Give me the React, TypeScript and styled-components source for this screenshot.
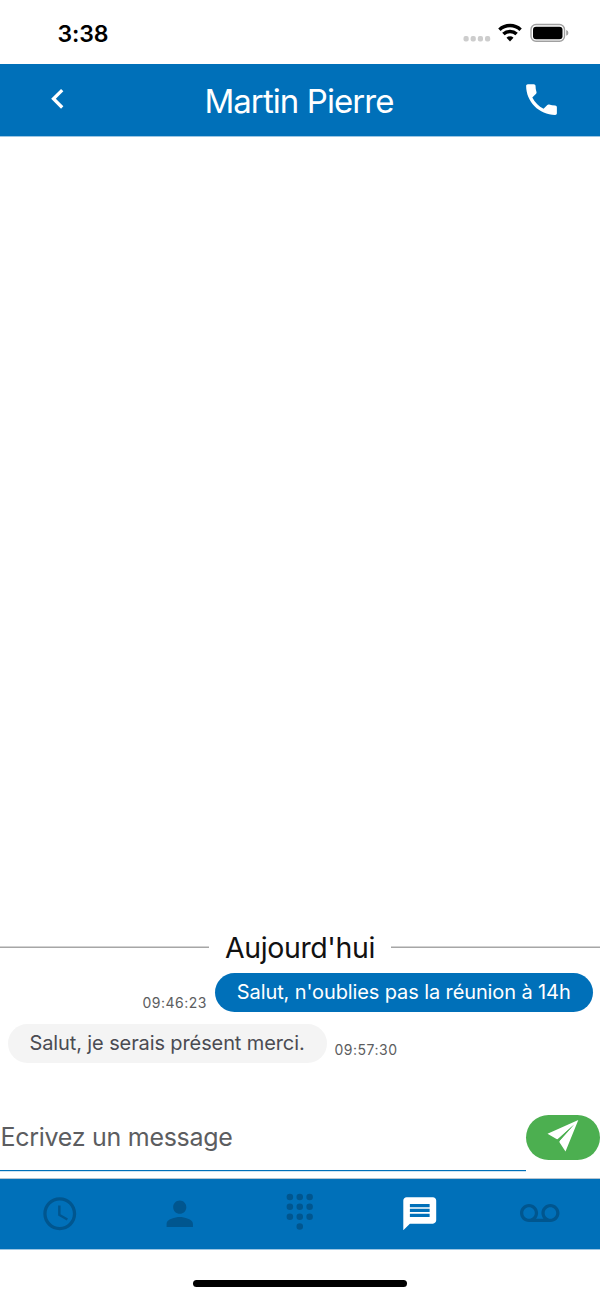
import React from "react";
import styled, { createGlobalStyle } from "styled-components";

const BLUE = "#0070b9";

const GlobalStyle = createGlobalStyle`
  * { box-sizing: border-box; }
  body { margin: 0; background: #fff; font-family: Inter, "Liberation Sans", sans-serif; }
`;

const Screen = styled.main`
  display: flex;
  flex-direction: column;
  width: 600px;
  height: 1299px;
  overflow: hidden;
  background: #fff;
`;

const StatusBar = styled.div`
  display: flex;
  align-items: center;
  justify-content: space-between;
  height: 64px;
  padding: 2px 31px 0 57.5px;
  flex: none;
`;

const Clock = styled.span`
  padding-top: 1px;
  font-size: 23px;
  font-weight: 600;
  line-height: 28px;
  letter-spacing: -0.1px;
  color: #000;
`;

const StatusIcons = styled.svg`
  display: block;
  width: 106px;
  height: 20px;
`;

const Header = styled.header`
  display: grid;
  grid-template-columns: 115px 1fr 117px;
  align-items: center;
  justify-items: center;
  height: 72px;
  flex: none;
  background: ${BLUE};
  color: #fff;
  box-shadow: 0 1px 0 #9cc6e3;
`;

const Title = styled.h1`
  margin: 0;
  padding-top: 1px;
  font-size: 33px;
  font-weight: 400;
  line-height: 40px;
  letter-spacing: -0.92px;
  white-space: nowrap;
`;

const IconButton = styled.button<{ $lift?: number }>`
  display: flex;
  padding: 0 0 ${(p) => p.$lift ?? 0}px;
  border: 0;
  background: none;
  color: inherit;
`;

const Glyph = styled.svg<{ $size: number }>`
  display: block;
  width: ${(p) => p.$size}px;
  height: ${(p) => p.$size}px;
  fill: currentColor;
`;

const Thread = styled.section`
  display: flex;
  flex: 1;
  flex-direction: column;
  justify-content: flex-end;
  padding-bottom: 40px;
`;

const DayDivider = styled.div`
  display: flex;
  align-items: center;
  gap: 16px;
  height: 36px;
  margin-bottom: 8px;
  font-size: 28.5px;
  font-weight: 400;
  letter-spacing: -0.4px;
  color: #111;
  white-space: nowrap;
  &::before, &::after {
    content: "";
    flex: 1;
    height: 2px;
    background: linear-gradient(#d2d2d2 50%, #a6a6a6 50%);
  }
`;

const MessageRow = styled.div<{ $mine?: boolean }>`
  display: flex;
  flex-direction: ${(p) => (p.$mine ? "row-reverse" : "row")};
  align-items: flex-end;
  gap: 8px;
  height: 39px;
  margin: 0 7.5px 12px;
`;

const Bubble = styled.div<{ $mine?: boolean; $width: number }>`
  display: flex;
  align-items: center;
  justify-content: center;
  width: ${(p) => p.$width}px;
  height: 39px;
  padding-bottom: 1px;
  border-radius: 20px;
  font-size: 20px;
  letter-spacing: -0.11px;
  white-space: nowrap;
  background: ${(p) => (p.$mine ? BLUE : "#f4f4f4")};
  color: ${(p) => (p.$mine ? "#fff" : "#4a4b52")};
`;

const Time = styled.time<{ $lift: number }>`
  padding-bottom: ${(p) => p.$lift}px;
  font-size: 14px;
  line-height: 18px;
  letter-spacing: 0.5px;
  color: #5c5d60;
`;

const Composer = styled.form`
  display: flex;
  flex: none;
  align-items: flex-start;
  height: 64px;
`;

const Field = styled.div`
  display: flex;
  align-items: center;
  flex: 1;
  height: 56px;
  padding: 0 0 11px 0.5px;
  border-bottom: 1px solid ${BLUE};
  box-shadow: 0 1px 0 #cfe3f2;
  font-size: 25px;
  letter-spacing: -0.28px;
  color: #5c5d60;
`;

const SendButton = styled.button`
  width: 74px;
  height: 45px;
  padding: 0;
  border: 0;
  border-radius: 23px;
  background: #4caf50;
  color: #fff;
`;

const SendGlyph = styled.svg`
  display: block;
  width: 74px;
  height: 45px;
  fill: currentColor;
`;

const TabBar = styled.nav`
  display: grid;
  grid-template-columns: repeat(5, 1fr);
  height: 70px;
  flex: none;
  background: ${BLUE};
  box-shadow: 0 -1px 0 #b5c4d0, 0 1px 0 #9cc6e3;
`;

const Tab = styled.button<{ $active?: boolean; $lift?: number }>`
  display: flex;
  align-items: center;
  justify-content: center;
  padding: 0 0 ${(p) => p.$lift ?? 0}px;
  border: 0;
  background: none;
  color: ${(p) => (p.$active ? "#fff" : "#00568f")};
`;

const HomeArea = styled.footer`
  display: flex;
  justify-content: center;
  height: 50px;
  flex: none;
  padding-top: 31px;
`;

const HomeIndicator = styled.div`
  width: 214px;
  height: 7px;
  border-radius: 4px;
  background: #000;
`;

const paths = {
  back: "M15.41 7.41 14 6l-6 6 6 6 1.41-1.41L10.83 12z",
  phone:
    "M6.62 10.79c1.44 2.83 3.76 5.14 6.59 6.59l2.2-2.2c.27-.27.67-.36 1.02-.24 1.12.37 2.33.57 3.57.57.55 0 1 .45 1 1V20c0 .55-.45 1-1 1-9.39 0-17-7.61-17-17 0-.55.45-1 1-1h3.5c.55 0 1 .45 1 1 0 1.25.2 2.45.57 3.57.11.35.03.74-.25 1.02l-2.2 2.2z",
  recent:
    "M11.99 2C6.47 2 2 6.48 2 12s4.47 10 9.99 10C17.52 22 22 17.52 22 12S17.52 2 11.99 2zM12 20c-4.42 0-8-3.58-8-8s3.58-8 8-8 8 3.58 8 8-3.58 8-8 8zm.5-13H11v6l5.25 3.15.75-1.23-4.5-2.67z",
  person:
    "M12 12c2.21 0 4-1.79 4-4s-1.79-4-4-4-4 1.79-4 4 1.79 4 4 4zm0 2c-2.67 0-8 1.34-8 4v2h16v-2c0-2.66-5.33-4-8-4z",
  dialpad:
    "M12 19a2 2 0 1 0 0 4 2 2 0 0 0 0-4zM6 1a2 2 0 1 0 0 4 2 2 0 0 0 0-4zm0 6a2 2 0 1 0 0 4 2 2 0 0 0 0-4zm0 6a2 2 0 1 0 0 4 2 2 0 0 0 0-4zM18 1a2 2 0 1 0 0 4 2 2 0 0 0 0-4zm0 6a2 2 0 1 0 0 4 2 2 0 0 0 0-4zm0 6a2 2 0 1 0 0 4 2 2 0 0 0 0-4zM12 1a2 2 0 1 0 0 4 2 2 0 0 0 0-4zm0 6a2 2 0 1 0 0 4 2 2 0 0 0 0-4zm0 6a2 2 0 1 0 0 4 2 2 0 0 0 0-4z",
  message:
    "M20 2H4c-1.1 0-1.99.9-1.99 2L2 22l4-4h14c1.1 0 2-.9 2-2V4c0-1.1-.9-2-2-2zm-2 12H6v-2h12v2zm0-3H6V9h12v2zm0-3H6V6h12v2z",
  voicemail:
    "M18.5 6C15.46 6 13 8.46 13 11.5c0 1.33.47 2.55 1.26 3.5H9.74c.79-.95 1.26-2.17 1.26-3.5C11 8.46 8.54 6 5.5 6S0 8.46 0 11.5 2.46 17 5.5 17h13c3.04 0 5.5-2.46 5.5-5.5S21.54 6 18.5 6zm-13 9C3.57 15 2 13.43 2 11.5S3.57 8 5.5 8 9 9.57 9 11.5 7.43 15 5.5 15zm13 0c-1.93 0-3.5-1.57-3.5-3.5S16.57 8 18.5 8 22 9.57 22 11.5 20.43 15 18.5 15z",
};

type IconName = keyof typeof paths;

function Icon({ name, size = 39.5 }: { name: IconName; size?: number }) {
  return (
    <Glyph $size={size} viewBox="0 0 24 24" aria-hidden="true">
      <path d={paths[name]} />
    </Glyph>
  );
}

const tabs: { icon: IconName; label: string; active?: boolean; lift?: number }[] = [
  { icon: "recent", label: "Récents" },
  { icon: "person", label: "Contacts" },
  { icon: "dialpad", label: "Clavier", lift: 4 },
  { icon: "message", label: "Messages", active: true },
  { icon: "voicemail", label: "Messagerie" },
];

export default function App() {
  return (
    <Screen>
      <GlobalStyle />
      <StatusBar>
        <Clock>3:38</Clock>
        <StatusIcons viewBox="0 0 106 20" aria-hidden="true">
          <g fill="#cdcdcd">
            <rect x="0.5" y="13" width="5.2" height="5.4" rx="2" />
            <rect x="7.6" y="13" width="5.2" height="5.4" rx="2" />
            <rect x="14.8" y="13" width="5.2" height="5.4" rx="2" />
            <rect x="22" y="13" width="5.2" height="5.4" rx="2" />
          </g>
          <g fill="none" stroke="#000" strokeWidth="3.5">
            <path d="M36.4 6.7a15.6 15.6 0 0 1 21.2 0" />
            <path d="M40.4 11.1a9.6 9.6 0 0 1 13.2 0" />
          </g>
          <path d="M43.5 14.7a5 5 0 0 1 7 0L47 18.4z" />
          <rect x="68" y="1.5" width="33.5" height="16.8" rx="5" fill="none" stroke="#a0a0a0" strokeWidth="1.4" />
          <rect x="70" y="3.7" width="29.5" height="12.5" rx="3" />
          <path d="M103.2 7.1q2.2.8 2.2 2.8t-2.2 2.8z" fill="#a0a0a0" />
        </StatusIcons>
      </StatusBar>

      <Header>
        <IconButton aria-label="Retour" $lift={2}>
          <Icon name="back" />
        </IconButton>
        <Title>Martin Pierre</Title>
        <IconButton aria-label="Appeler" $lift={1}>
          <Icon name="phone" size={41} />
        </IconButton>
      </Header>

      <Thread>
        <DayDivider>Aujourd'hui</DayDivider>
        <MessageRow $mine>
          <Bubble $mine $width={377.5}>Salut, n'oublies pas la réunion à 14h</Bubble>
          <Time $lift={0}>09:46:23</Time>
        </MessageRow>
        <MessageRow>
          <Bubble $width={319}>Salut, je serais présent merci.</Bubble>
          <Time $lift={4}>09:57:30</Time>
        </MessageRow>
      </Thread>

      <Composer>
        <Field>Ecrivez un message</Field>
        <SendButton type="button" aria-label="Envoyer">
          <SendGlyph viewBox="0 0 74 45" aria-hidden="true">
            <path d="M52.3 5 21.5 18.8l9 5.2q1.2.4 2-.4L47.8 9.8 33.8 25.6q-.8.9-.2 1.8L39.5 36.4z" />
            <path d="M48.2 9.4 31.6 24.6l1.6 1.6z" fill="#4caf50" />
          </SendGlyph>
        </SendButton>
      </Composer>

      <TabBar>
        {tabs.map((tab) => (
          <Tab key={tab.icon} $active={tab.active} $lift={tab.lift} aria-label={tab.label}>
            <Icon name={tab.icon} />
          </Tab>
        ))}
      </TabBar>
      <HomeArea>
        <HomeIndicator />
      </HomeArea>
    </Screen>
  );
}
